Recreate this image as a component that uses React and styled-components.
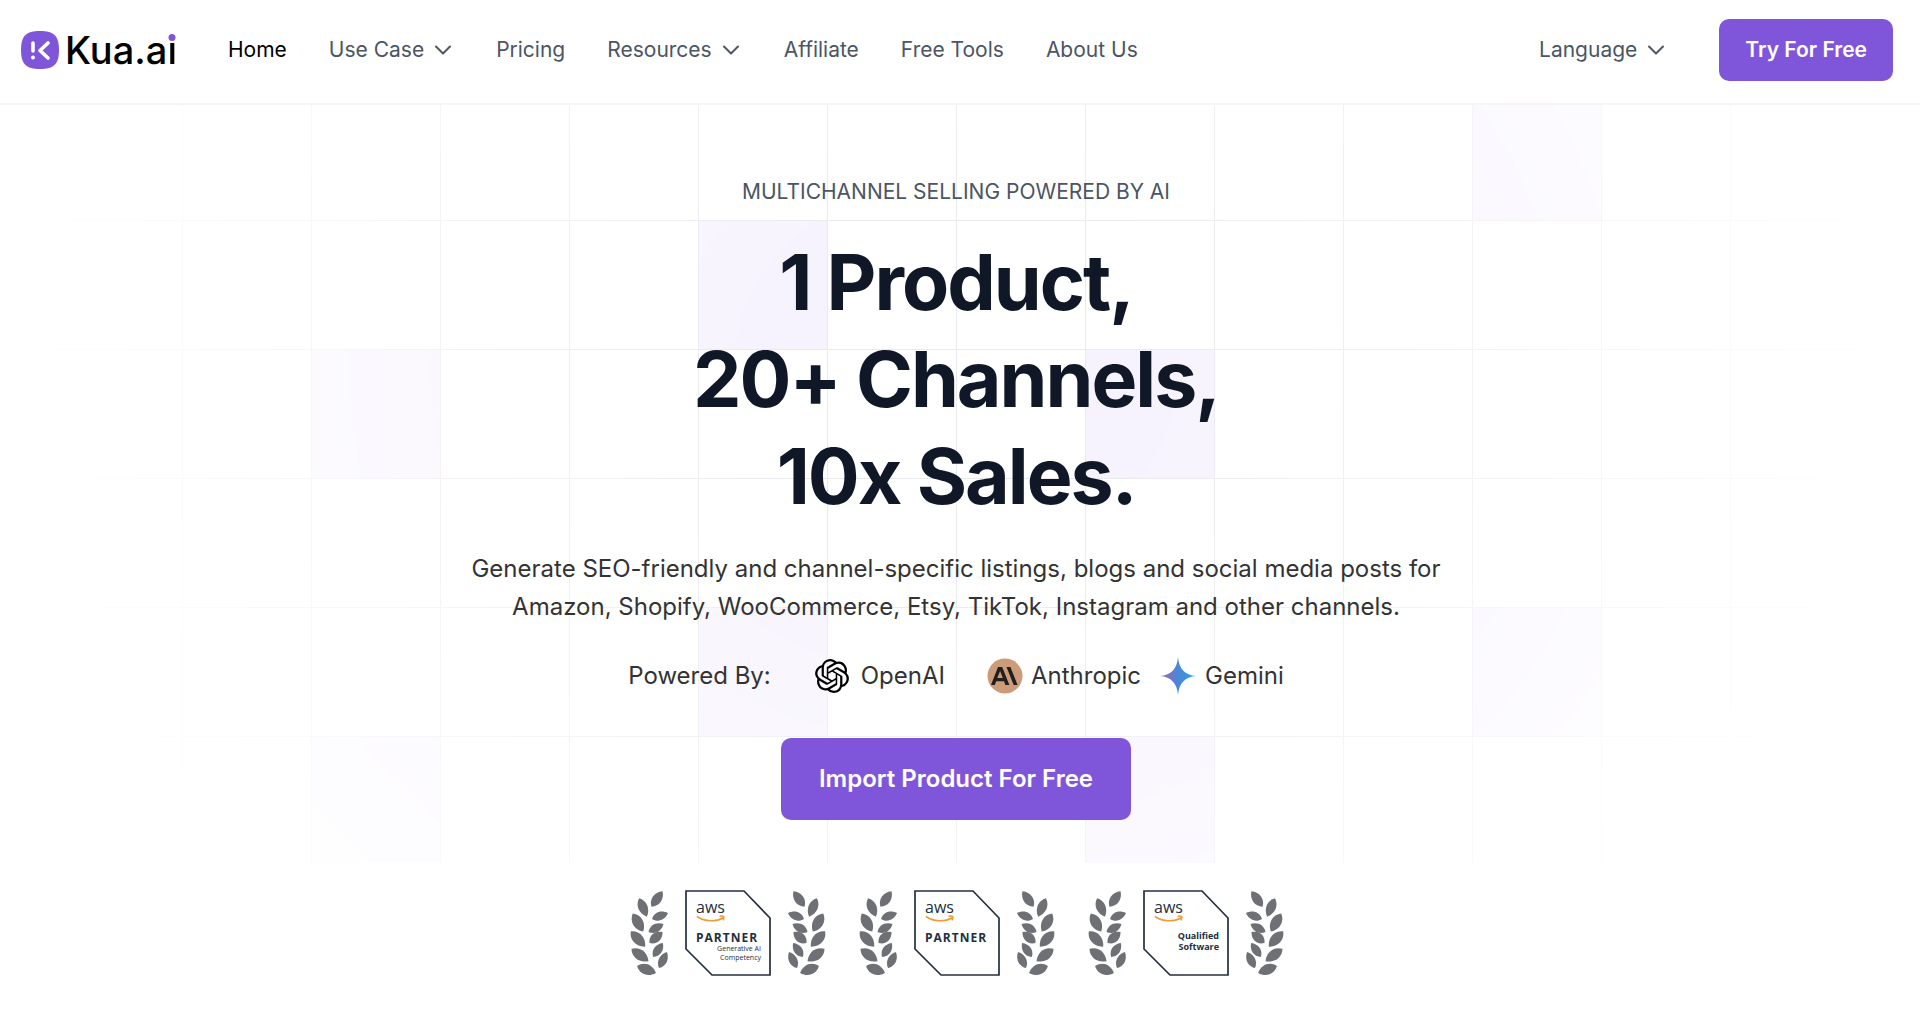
import styled, { createGlobalStyle } from 'styled-components';
import { SiOpenai } from 'react-icons/si';

const GlobalStyle = createGlobalStyle`
    *
    {
        box-sizing: border-box;
    }
    body
    {
        margin: 0;
        background-color: #fff;
        font-family: Inter, "Liberation Sans", sans-serif;
        color: #333;
    }
`;

const CELL = 129;

// columns counted from the middle line, rows from the top
const tiles = [
    [4, 0], [-2, 1], [1, 2], [-5, 2],
    [-2, 4], [4, 4], [1, 5], [-5, 5],
];

const navLinks = [
    { name: 'Home', active: true },
    { name: 'Use Case', menu: true },
    { name: 'Pricing' },
    { name: 'Resources', menu: true },
    { name: 'Affiliate' },
    { name: 'Free Tools' },
    { name: 'About Us' },
];

// x, y, rotation, length and width of each leaf
const leaves = [
    [28, 9, -54, 19, 9], [14, 17.5, 67, 20, 9], [31, 26, -20, 17, 8],
    [9, 32.5, 60, 21, 10], [27, 38, -28, 17, 8], [9, 49, 47, 21, 10],
    [27, 47.5, -40, 17, 9], [11, 65, 36, 21, 10], [29, 60, -55, 17, 8],
    [34, 70, -64, 18, 8], [17.5, 79.5, 20, 20, 10],
];

const LogoMark = () => (
    <svg width="38" height="38" viewBox="0 0 38 38" aria-hidden="true">
        <path d="M19 0C33 0 38 5 38 19S33 38 19 38 0 33 0 19 5 0 19 0Z" fill="#7f56d9" />
        <path d="M12 12v8M27 12l-8 7.500 8 7.500" fill="none" stroke="#fff" strokeWidth="3.600" strokeLinecap="round" strokeLinejoin="round" />
        <circle cx="12" cy="26.500" r="2" fill="#fff" />
    </svg>
);

const Chevron = () => (
    <svg width="22" height="22" viewBox="0 0 22 22" aria-hidden="true">
        <path d="M4 7.500l7 7 7-7" fill="none" stroke="currentColor" strokeWidth="2" strokeLinecap="round" strokeLinejoin="round" />
    </svg>
);

const AnthropicIcon = () => (
    <svg width="36" height="36" viewBox="0 0 36 36" aria-hidden="true">
        <circle cx="18" cy="18" r="17.500" fill="#cc9b7a" />
        <path fill="#1f1f1e" fillRule="evenodd" d="M11 9h4.200L22.400 27h-4l-1.400-3.700H9.200L7.800 27H4L11 9Zm-.7 11.100h5.500l-2.700-7.100-2.800 7.100ZM19.500 9h3.900L30.600 27h-3.900L19.500 9Z" />
    </svg>
);

const GeminiIcon = () => (
    <svg width="38" height="38" viewBox="0 0 38 38" aria-hidden="true">
        <defs>
            <linearGradient id="gemini" x1="0" y1="0" x2="1" y2="0">
                <stop offset="0.150" stopColor="#8a6fc0" />
                <stop offset="0.500" stopColor="#4a86d8" />
                <stop offset="0.900" stopColor="#2fa3dc" />
            </linearGradient>
        </defs>
        <path fill="url(#gemini)" d="M19 0C20 12 26 18 37 19 26 20 20 26 19 38 18 26 12 20 1 19 12 18 18 12 19 0Z" />
    </svg>
);

const Laurel = ({ flip }) => (
    <LaurelSvg width="40" height="86" viewBox="0 0 40 86" $flip={flip} aria-hidden="true">
        {leaves.map(([x, y, turn, l, w]) => (
            <path
                key={`${x}-${y}`}
                transform={`translate(${x} ${y}) rotate(${turn})`}
                d={`M${-l / 2} 0C${-l / 4} ${-w * 0.7} ${l / 5} ${-w * 0.7} ${l / 2} 0C${l / 5} ${w * 0.7} ${-l / 4} ${w * 0.7} ${-l / 2} 0Z`}
            />
        ))}
    </LaurelSvg>
);

const AwsBadge = ({ title, lines, bold }) => (
    <Award>
        <Laurel />
        <Plate>
            <PlateFrame viewBox="0 0 86 86" aria-hidden="true">
                <path d="M1 1h58l26 27v57H27L1 59Z" fill="#fff" stroke="#232f3e" strokeWidth="1.700" />
            </PlateFrame>
            <AwsName>aws</AwsName>
            <svg width="30" height="8" viewBox="0 0 30 8" aria-hidden="true">
                <path d="M1 1.500c8 5.500 19 5.500 26 1.200M23.500 1.200c4.500-.8 5.300 0 3.500 4.200" fill="none" stroke="#f19a38" strokeWidth="1.600" />
            </svg>
            {title && <PlateTitle>{title}</PlateTitle>}
            <PlateLines $bold={bold}>
                {lines.map((line) => <span key={line}>{line}</span>)}
            </PlateLines>
        </Plate>
        <Laurel flip />
    </Award>
);

const App = () => {
    return (
        <>
            <GlobalStyle />
            <Header>
                <Logo href="#">
                    <LogoMark />
                    <LogoText>Kua.a<DottedI>i</DottedI></LogoText>
                </Logo>
                <Nav>
                    {navLinks.map(({ name, active, menu }) => (
                        menu
                            ? <NavButton key={name}>{name}<Chevron /></NavButton>
                            : <NavLink key={name} href="#" $active={active}>{name}</NavLink>
                    ))}
                </Nav>
                <NavButton>Language<Chevron /></NavButton>
                <TryButton>Try For Free</TryButton>
            </Header>
            <main>
                <Hero>
                    <GridLines aria-hidden="true">
                        <defs>
                            <pattern id="grid" width={CELL} height={CELL} x="50%" y="-14" patternUnits="userSpaceOnUse">
                                <path d={`M.5 ${CELL}V.5H${CELL}`} fill="none" stroke="#e9eaee" />
                            </pattern>
                        </defs>
                        <svg x="50%" y="-14" overflow="visible">
                            {tiles.map(([col, row]) => (
                                <rect key={`${col}-${row}`} x={col * CELL} y={row * CELL} width={CELL} height={CELL} fill="#f7f3fe" />
                            ))}
                        </svg>
                        <rect width="100%" height="100%" fill="url(#grid)" />
                    </GridLines>
                    <Eyebrow>MULTICHANNEL SELLING POWERED BY AI</Eyebrow>
                    <Title>1 Product,<br />20+ Channels,<br />10x Sales.</Title>
                    <Lead>
                        Generate SEO-friendly and channel-specific listings, blogs and social media posts for
                        Amazon, Shopify, WooCommerce, Etsy, TikTok, Instagram and other channels.
                    </Lead>
                    <Powered>
                        <PoweredLabel>Powered By:</PoweredLabel>
                        <Maker $gap={12} $after={42}><SiOpenai size={34} color="#000" />OpenAI</Maker>
                        <Maker $after={18}><AnthropicIcon />Anthropic</Maker>
                        <Maker><GeminiIcon />Gemini</Maker>
                    </Powered>
                    <ImportButton>Import Product For Free</ImportButton>
                </Hero>
                <Awards>
                    <AwsBadge title="PARTNER" lines={['Generative AI', 'Competency']} />
                    <AwsBadge title="PARTNER" lines={[]} />
                    <AwsBadge lines={['Qualified', 'Software']} bold />
                </Awards>
            </main>
        </>
    )
}

const Header = styled.header`
    display: flex;
    align-items: center;
    height: 105px;
    padding: 0 27px 3px 21px;
    border-bottom: 2px solid #f5f5f7;
`;

const Logo = styled.a`
    display: flex;
    align-items: center;
    gap: 6px;
    color: #000;
    text-decoration: none;
`;

const LogoText = styled.span`
    font-size: 38px;
    line-height: 40px;
    font-weight: 500;
`;

// only the dot of the letter takes the brand colour
const DottedI = styled.span`
    position: relative;
    display: inline-block;
    background: linear-gradient(#7f56d9 12px, #000 12px);
    background-clip: text;
    color: transparent;
    &::after
    {
        content: "";
        position: absolute;
        top: 4px;
        left: 50%;
        width: 7px;
        height: 7px;
        border-radius: 50%;
        background-color: #7f56d9;
        transform: translateX(-50%);
    }
`;

const Nav = styled.nav`
    display: flex;
    gap: 42px;
    flex: 1;
    margin-left: 51px;
`;

const NavLink = styled.a`
    font-size: 21px;
    line-height: 32px;
    color: ${({ $active }) => ($active ? '#000' : '#4b5563')};
    text-decoration: none;
    white-space: nowrap;
`;

const NavButton = styled.button`
    display: flex;
    align-items: center;
    gap: 8px;
    padding: 0;
    border: none;
    background: none;
    font: inherit;
    font-size: 21px;
    line-height: 32px;
    color: #4b5563;
    cursor: pointer;
`;

const PrimaryButton = styled.button`
    border: none;
    border-radius: 10px;
    background-color: #7f56d9;
    color: #fff;
    font-family: inherit;
    font-weight: 600;
    cursor: pointer;
`;

const TryButton = styled(PrimaryButton)`
    margin-left: 52px;
    padding: 15px 26px;
    font-size: 21px;
    line-height: 32px;
`;

const Hero = styled.section`
    position: relative;
    display: flex;
    flex-direction: column;
    align-items: center;
    padding: 71px 24px 43px;
    margin-right: 8px;
    text-align: center;
`;

const GridLines = styled.svg`
    position: absolute;
    inset: 0;
    z-index: -1;
    width: 100%;
    height: 100%;
    mask-image: radial-gradient(ellipse 50% 110% at 50% 35%, #000 20%, transparent);
`;

const Eyebrow = styled.p`
    margin: 0;
    font-size: 21px;
    line-height: 32px;
    color: #4b5563;
`;

const Title = styled.h1`
    margin: 26px 0 25px;
    font-size: 77px;
    line-height: 97px;
    font-weight: 700;
    letter-spacing: -2px;
    color: #101828;
`;

const Lead = styled.p`
    max-width: 1010px;
    margin: 0;
    font-size: 24px;
    line-height: 38px;
`;

const Powered = styled.div`
    display: flex;
    align-items: center;
    margin: 30px 0 42px;
    font-size: 24px;
    line-height: 40px;
`;

const PoweredLabel = styled.span`
    margin-right: 44px;
`;

const Maker = styled.span`
    display: flex;
    align-items: center;
    gap: ${({ $gap = 8 }) => $gap}px;
    margin-right: ${({ $after = 0 }) => $after}px;
`;

const ImportButton = styled(PrimaryButton)`
    padding: 23px 38px;
    font-size: 24px;
    line-height: 36px;
`;

const Awards = styled.div`
    display: flex;
    justify-content: center;
    gap: 31px;
    margin: 27px 6px 38px 0;
`;

const Award = styled.div`
    display: flex;
    gap: 16px;
`;

const LaurelSvg = styled.svg`
    fill: #6f7076;
    transform: ${({ $flip }) => ($flip ? 'scaleX(-1)' : 'none')};
`;

const Plate = styled.div`
    position: relative;
    display: flex;
    flex-direction: column;
    width: 86px;
    height: 86px;
    padding: 9px 10px 0 11px;
    font-family: "Open Sans", "Noto Sans", sans-serif;
    color: #232f3e;
`;

const PlateFrame = styled.svg`
    position: absolute;
    inset: 0;
    z-index: -1;
`;

const AwsName = styled.span`
    font-size: 16px;
    line-height: 16px;
    font-weight: 500;
`;

const PlateTitle = styled.strong`
    margin-top: 8px;
    font-size: 12px;
    line-height: 13px;
    letter-spacing: 1px;
`;

const PlateLines = styled.span`
    display: flex;
    flex-direction: column;
    margin-top: ${({ $bold }) => ($bold ? 7 : 0)}px;
    font-size: ${({ $bold }) => ($bold ? 9 : 7)}px;
    line-height: ${({ $bold }) => ($bold ? 11 : 9)}px;
    font-weight: ${({ $bold }) => ($bold ? 700 : 500)};
    text-align: right;
`;

export default App;
